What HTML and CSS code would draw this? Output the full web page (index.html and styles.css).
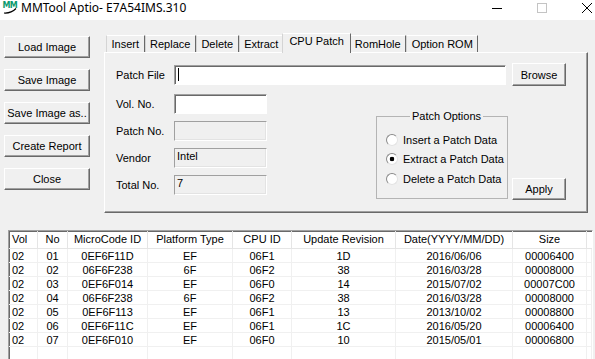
FILE: index.html
```html
<!DOCTYPE html>
<html lang="en">
<head>
    <meta charset="UTF-8">
    <title>MMTool Aptio- E7A54IMS.310</title>
    <link rel="stylesheet" href="styles.css">
</head>
<body>
    <div class="titlebar">
        <svg class="app-icon" width="16" height="15" viewBox="0 0 16 15">
            <text x="0.5" y="8" class="icon-text">MM</text>
            <path d="M2 13 Q9 13.5 14 8.5" fill="none" stroke="#000" stroke-width="1.2"/>
        </svg>
        <span class="title">MMTool Aptio- E7A54IMS.310</span>
        <div class="controls">
            <div class="ctrl"><svg width="10" height="10"><path d="M0 5.5H10" stroke="#000"/></svg></div>
            <div class="ctrl"><svg width="10" height="10"><rect x="0.5" y="0.5" width="9" height="9" fill="none" stroke="#c4c4c4"/></svg></div>
            <div class="ctrl"><svg width="10" height="10"><path d="M0 0L10 10M10 0L0 10" stroke="#000"/></svg></div>
        </div>
    </div>

    <div class="top">
        <div class="side">
            <button class="btn">Load Image</button>
            <button class="btn">Save Image</button>
            <button class="btn">Save Image as..</button>
            <button class="btn">Create Report</button>
            <button class="btn">Close</button>
        </div>

        <div class="tabs">
            <div class="tab-strip">
                <div class="tab">Insert</div>
                <div class="tab">Replace</div>
                <div class="tab">Delete</div>
                <div class="tab">Extract</div>
                <div class="tab active">CPU Patch</div>
                <div class="tab">RomHole</div>
                <div class="tab">Option ROM</div>
            </div>
            <div class="panel">
                <div class="file-row">
                    <span class="label">Patch File</span>
                    <div class="field wide"><span class="caret"></span></div>
                    <button class="btn small tall">Browse</button>
                </div>
                <div class="lower">
                    <div class="fields">
                        <div class="field-row"><span class="label">Vol. No.</span><div class="field"></div></div>
                        <div class="field-row"><span class="label">Patch No.</span><div class="field readonly"></div></div>
                        <div class="field-row"><span class="label">Vendor</span><div class="field readonly">Intel</div></div>
                        <div class="field-row"><span class="label">Total No.</span><div class="field readonly">7</div></div>
                    </div>
                    <fieldset class="options">
                        <legend>Patch Options</legend>
                        <div class="radio"><span class="dot"></span>Insert a Patch Data</div>
                        <div class="radio"><span class="dot checked"></span>Extract a Patch Data</div>
                        <div class="radio"><span class="dot"></span>Delete a Patch Data</div>
                    </fieldset>
                    <button class="btn small apply">Apply</button>
                </div>
            </div>
        </div>
    </div>

    <div class="list">
        <div class="row head">
            <div class="cell left">Vol</div>
            <div class="cell">No</div>
            <div class="cell">MicroCode ID</div>
            <div class="cell">Platform Type</div>
            <div class="cell">CPU ID</div>
            <div class="cell">Update Revision</div>
            <div class="cell">Date(YYYY/MM/DD)</div>
            <div class="cell">Size</div>
            <div class="cell"></div>
        </div>
        <div id="rows"></div>
        <div class="row filler">
            <div class="cell"></div><div class="cell"></div><div class="cell"></div>
            <div class="cell"></div><div class="cell"></div><div class="cell"></div>
            <div class="cell"></div><div class="cell"></div><div class="cell"></div>
        </div>
    </div>

    <script>
        const patches = [
            ['02', '01', '0EF6F11D', 'EF', '06F1', '1D', '2016/06/06', '00006400'],
            ['02', '02', '06F6F238', '6F', '06F2', '38', '2016/03/28', '00008000'],
            ['02', '03', '0EF6F014', 'EF', '06F0', '14', '2015/07/02', '00007C00'],
            ['02', '04', '06F6F238', '6F', '06F2', '38', '2016/03/28', '00008000'],
            ['02', '05', '0EF6F113', 'EF', '06F1', '13', '2013/10/02', '00008800'],
            ['02', '06', '0EF6F11C', 'EF', '06F1', '1C', '2016/05/20', '00006400'],
            ['02', '07', '0EF6F010', 'EF', '06F0', '10', '2015/05/01', '00006800']
        ];

        // Build the list view rows
        const rows = document.getElementById('rows');
        patches.forEach(p => {
            const row = document.createElement('div');
            row.className = 'row';
            p.concat('').forEach((value, i) => {
                const cell = document.createElement('div');
                cell.className = i === 0 ? 'cell left' : 'cell';
                cell.textContent = value;
                row.appendChild(cell);
            });
            rows.appendChild(row);
        });
    </script>
</body>
</html>
```

FILE: styles.css
```css
:root {
    --face: #f0f0f0;
    --shadow: #a0a0a0;
    --dark: #696969;
    --grid: #f0f0f0;
}

* {
    box-sizing: border-box;
}

body {
    margin: 0;
    width: 595px;
    height: 359px;
    overflow: hidden;
    background: var(--face);
    font-family: "Liberation Sans", Arial, sans-serif;
    font-size: 11px;
    color: #000;
}

/* title bar */
.titlebar {
    height: 20px;
    background: #fff;
    display: flex;
}

.app-icon {
    flex-shrink: 0;
    margin: 0 3px 0 2px;
}

.icon-text {
    font-family: "DejaVu Sans", sans-serif;
    font-size: 8px;
    font-weight: bold;
    fill: #0b9a6e;
    letter-spacing: -0.8px;
}

.title {
    font-family: "Noto Sans", "Open Sans", sans-serif;
    font-size: 12px;
    line-height: 15px;
    white-space: nowrap;
}

.controls {
    display: flex;
    margin-left: auto;
    margin-right: -14px;
}

.ctrl {
    width: 45px;
    height: 15px;
    display: flex;
    align-items: center;
    justify-content: center;
}

/* upper area */
.top {
    display: flex;
    height: 193px;
}

.side {
    width: 86px;
    margin-left: 4px;
    padding-top: 16px;
    display: flex;
    flex-direction: column;
    gap: 11px;
}

.btn {
    height: 22px;
    padding: 0;
    font: inherit;
    color: #000;
    background: var(--face);
    border: 1px solid;
    border-color: #fff var(--dark) var(--dark) #fff;
    box-shadow: inset -1px -1px var(--shadow);
}

.btn.small {
    width: 54px;
    flex-shrink: 0;
}

.btn.tall {
    height: 23px;
}

.tabs {
    width: 484px;
    margin: 13px 0 0 14px;
}

.tab-strip {
    display: flex;
    align-items: flex-end;
    height: 19px;
    padding-left: 2px;
}

.tab {
    height: 17px;
    padding: 0 4.5px;
    line-height: 16px;
    white-space: nowrap;
    background: var(--face);
    border: 1px solid;
    border-color: #fff var(--dark) transparent #d4d4d4;
    border-bottom: none;
}

.tab.active {
    height: 20px;
    margin: 0 -2px -1px;
    padding: 0 6.5px;
    line-height: 15px;
    position: relative;
    z-index: 1;
}

.panel {
    height: 161px;
    padding: 10px 21px 0 11px;
    border: 1px solid;
    border-color: #fff var(--dark) var(--dark) #fff;
    box-shadow: inset -1px -1px var(--shadow);
}

.file-row {
    display: flex;
    align-items: center;
}

.label {
    width: 58px;
    flex-shrink: 0;
}

.field {
    width: 93px;
    height: 20px;
    padding: 1px 2px;
    line-height: 13px;
    background: #fff;
    border: 1px solid;
    border-color: var(--shadow) #fff #fff var(--shadow);
    box-shadow: inset 1px 1px var(--dark);
}

.field.wide {
    flex: 1;
    margin-right: 6px;
    padding: 2px 3px;
}

.field.readonly {
    background: var(--face);
    border-color: var(--shadow) #fff #fff var(--shadow);
    box-shadow: inset -1px -1px #e3e3e3;
}

.caret {
    display: block;
    width: 1px;
    height: 13px;
    background: #000;
}

.lower {
    display: flex;
    margin-top: 8px;
}

.fields {
    display: flex;
    flex-direction: column;
    gap: 7px;
}

.field-row {
    display: flex;
    align-items: center;
}

.options {
    width: 132px;
    height: 89px;
    min-width: 0;
    margin: 16px 4px 0 auto;
    padding: 7px 0 0 9px;
    border: 1px solid #b4b4b4;
}

.options legend {
    margin: 0 auto;
    padding: 0 2px;
    line-height: 13px;
}

.radio {
    display: flex;
    align-items: center;
    gap: 5px;
    height: 19.5px;
}

.dot {
    width: 12px;
    height: 12px;
    border-radius: 50%;
    background: #fff;
    border: 1px solid;
    border-color: #8a8a8a #e3e3e3 #e3e3e3 #8a8a8a;
}

.dot.checked {
    background: radial-gradient(circle, #000 0 2px, #fff 2.6px);
}

.apply {
    margin-top: 84px;
}

/* list view */
.list {
    width: 585px;
    height: 135px;
    margin: 17px 0 0 8px;
    background: #fff;
    overflow: hidden;
    border: 1px solid;
    border-color: var(--shadow) #fff #fff var(--shadow);
    box-shadow: inset 1px 1px var(--dark);
}

.row {
    display: grid;
    grid-template-columns: 29px 30px 80px 85px 59px 104px 117px 74px 1fr;
}

.cell {
    height: 14px;
    line-height: 14px;
    text-align: center;
    white-space: nowrap;
    border-right: 1px solid var(--grid);
    border-bottom: 1px solid var(--grid);
}

.cell.left {
    text-align: left;
    padding-left: 3px;
}

.head .cell {
    height: 18px;
    line-height: 17px;
    border-right-color: #e5e5e5;
    border-bottom-color: #e5e5e5;
}

.head .cell:last-child {
    border-right: none;
}

.filler .cell {
    height: 40px;
    border-bottom: none;
}
```
